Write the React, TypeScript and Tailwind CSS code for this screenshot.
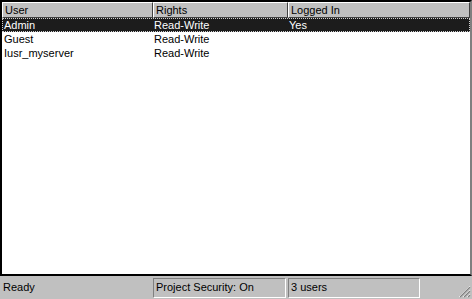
import React from "react";

const users = [
  { name: "Admin", rights: "Read-Write", loggedIn: "Yes" },
  { name: "Guest", rights: "Read-Write", loggedIn: "" },
  { name: "Iusr_myserver", rights: "Read-Write", loggedIn: "" },
];

function HeaderCell({ label, width }: { label: string; width: string }) {
  return (
    <div
      className={`${width} h-[16px] shrink-0 bg-[#c0c0c0] border-t border-l border-white border-r border-b border-r-[#404040] border-b-[#404040] pl-[2px] leading-[14px] text-black`}
    >
      {label}
    </div>
  );
}

export default function App() {
  return (
    <div
      className="w-[472px] h-[299px] bg-[#c0c0c0] flex flex-col text-[11px] text-black"
      style={{ fontFamily: '"Liberation Sans", Arial, sans-serif' }}
    >
      <div className="flex-1 border-2 border-black border-r-[#808080] border-b-black bg-white flex flex-col overflow-hidden">
        <div className="flex">
          <HeaderCell label="User" width="w-[151px]" />
          <HeaderCell label="Rights" width="w-[135px]" />
          <HeaderCell label="Logged In" width="flex-1" />
        </div>
        {users.map((u, i) => (
          <div
            key={u.name}
            className={`flex h-[14px] leading-[12px] ${
              i === 0 ? "bg-[#1c1c1c] text-white border border-dotted border-[#cfcfcf]" : "px-[1px] leading-[14px]"
            }`}
          >
            <div className="w-[150px] pl-[1px]">{u.name}</div>
            <div className="w-[135px] pl-[1px]">{u.rights}</div>
            <div className="flex-1 pl-[1px]">{u.loggedIn}</div>
          </div>
        ))}
      </div>
      <div className="h-[21px] mt-[2px] flex items-stretch pb-[1px]">
        <div className="w-[153px] pl-[3px] leading-[18px]">Ready</div>
        <div className="w-[133px] mr-[2px] border border-t-[#808080] border-l-[#808080] border-r-white border-b-white pl-[2px] leading-[16px]">
          Project Security: On
        </div>
        <div className="w-[132px] border border-t-[#808080] border-l-[#808080] border-r-white border-b-white pl-[2px] leading-[16px]">
          3 users
        </div>
        <div className="flex-1 flex items-end justify-end pr-[1px]">
          <svg width="13" height="13" viewBox="0 0 13 13">
            <path d="M12 1 L1 12 M12 5 L5 12 M12 9 L9 12" stroke="#ffffff" strokeWidth="1" />
            <path d="M12 2 L2 12 M12 6 L6 12 M12 10 L10 12" stroke="#808080" strokeWidth="1.2" />
          </svg>
        </div>
      </div>
    </div>
  );
}
